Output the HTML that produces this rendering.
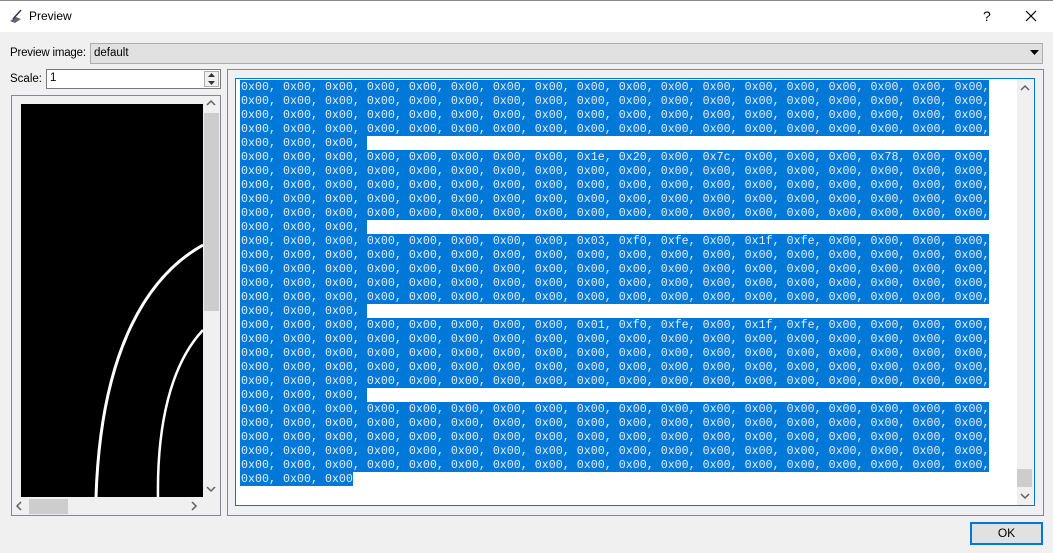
<!DOCTYPE html>
<html><head><meta charset="utf-8"><style>
*{box-sizing:border-box;margin:0;padding:0}
body{width:1053px;height:553px;background:#f0f0f0;font-family:"Liberation Sans",sans-serif;font-size:11.5px;color:#000;position:relative;overflow:hidden}
.abs{position:absolute}
.code{position:absolute;left:240px;top:80px;font-family:"Liberation Mono",monospace;font-size:11.67px;line-height:14px;color:#e4eeff}
.code div{white-space:pre;background:#0078d7;height:14px;width:max-content;padding-left:1px}
</style></head><body>
<div class="abs" style="left:0;top:0;width:1053px;height:1px;background:#888"></div>
<div class="abs" style="left:0;top:1px;width:1053px;height:31px;background:#fff"></div>
<svg class="abs" style="left:8px;top:8px" width="16" height="16" viewBox="0 0 16 16"><path d="M2 13 L8 9 L13 11 L7 15 Z" fill="#666"/><path d="M5 11 L13 2" stroke="#335" stroke-width="1.5"/></svg>
<div class="abs" style="left:29px;top:9px;font-size:12px">Preview</div>
<div class="abs" style="left:983px;top:8px;font-size:14px">?</div>
<svg class="abs" style="left:1025px;top:10px" width="12" height="12"><path d="M1 1L11 11M11 1L1 11" stroke="#000" stroke-width="1.2"/></svg>

<div class="abs" style="left:10px;top:47px;white-space:nowrap;letter-spacing:-0.2px">Preview image:</div>
<div class="abs" style="left:90px;top:43px;width:953px;height:21px;background:#e1e1e1;border:1px solid #adadad;padding:3px 3px">default</div>
<svg class="abs" style="left:1030px;top:50px" width="9" height="6"><path d="M0 0H9L4.5 5Z" fill="#000"/></svg>

<div class="abs" style="left:10px;top:73px">Scale:</div>
<div class="abs" style="left:46px;top:69px;width:175px;height:20px;background:#fff;border:1px solid #7a7a7a;padding:2px 3px">1</div>
<div class="abs" style="left:204px;top:71px;width:15px;height:16px;border:1px solid #adadad;background:#f0f0f0"></div>
<svg class="abs" style="left:207px;top:72px" width="9" height="14"><path d="M1 5L4.5 1L8 5Z M1 9L4.5 13L8 9Z" fill="#333"/></svg>

<div class="abs" style="left:11px;top:95px;width:210px;height:421px;border:1px solid #828790;background:#f0f0f0"></div>
<svg class="abs" style="left:21px;top:104px" width="182" height="393"><rect width="182" height="393" fill="#000"/>
<path d="M182 141 C130 170 80 240 75 393" stroke="#fff" stroke-width="3" fill="none"/>
<path d="M182 226 C150 260 136 320 137 393" stroke="#fff" stroke-width="2.5" fill="none"/></svg>
<div class="abs" style="left:203px;top:96px;width:16px;height:401px;background:#f0f0f0"></div>
<div class="abs" style="left:204px;top:113px;width:15px;height:198px;background:#cdcdcd"></div>
<svg class="abs" style="left:206px;top:99px" width="10" height="8"><path d="M1 6L5 2L9 6" stroke="#606060" stroke-width="1.5" fill="none"/></svg>
<svg class="abs" style="left:206px;top:485px" width="10" height="8"><path d="M1 2L5 6L9 2" stroke="#606060" stroke-width="1.5" fill="none"/></svg>
<div class="abs" style="left:12px;top:497px;width:191px;height:18px;background:#f0f0f0"></div>
<div class="abs" style="left:29px;top:499px;width:39px;height:15px;background:#cdcdcd"></div>
<svg class="abs" style="left:15px;top:501px" width="8" height="10"><path d="M6 1L2 5L6 9" stroke="#606060" stroke-width="1.5" fill="none"/></svg>
<svg class="abs" style="left:190px;top:501px" width="8" height="10"><path d="M2 1L6 5L2 9" stroke="#606060" stroke-width="1.5" fill="none"/></svg>

<div class="abs" style="left:227px;top:69px;width:817px;height:447px;border:1px solid #828790;background:#f0f0f0"></div>
<div class="abs" style="left:235px;top:78px;width:800px;height:428px;border:1px solid #0078d7;background:#fff"></div>
<div class="abs" style="left:237px;top:80px;width:2px;height:14px;background:#fff"></div>
<div class="abs" style="left:1017px;top:79px;width:17px;height:426px;background:#f0f0f0"></div>
<div class="abs" style="left:1017px;top:469px;width:15px;height:18px;background:#cdcdcd"></div>
<svg class="abs" style="left:1020px;top:84px" width="10" height="8"><path d="M1 6L5 2L9 6" stroke="#606060" stroke-width="1.5" fill="none"/></svg>
<svg class="abs" style="left:1020px;top:492px" width="10" height="8"><path d="M1 2L5 6L9 2" stroke="#606060" stroke-width="1.5" fill="none"/></svg>

<div class="code">
<div>0x00, 0x00, 0x00, 0x00, 0x00, 0x00, 0x00, 0x00, 0x00, 0x00, 0x00, 0x00, 0x00, 0x00, 0x00, 0x00, 0x00, 0x00,</div>
<div>0x00, 0x00, 0x00, 0x00, 0x00, 0x00, 0x00, 0x00, 0x00, 0x00, 0x00, 0x00, 0x00, 0x00, 0x00, 0x00, 0x00, 0x00,</div>
<div>0x00, 0x00, 0x00, 0x00, 0x00, 0x00, 0x00, 0x00, 0x00, 0x00, 0x00, 0x00, 0x00, 0x00, 0x00, 0x00, 0x00, 0x00,</div>
<div>0x00, 0x00, 0x00, 0x00, 0x00, 0x00, 0x00, 0x00, 0x00, 0x00, 0x00, 0x00, 0x00, 0x00, 0x00, 0x00, 0x00, 0x00,</div>
<div>0x00, 0x00, 0x00, </div>
<div>0x00, 0x00, 0x00, 0x00, 0x00, 0x00, 0x00, 0x00, 0x1e, 0x20, 0x00, 0x7c, 0x00, 0x00, 0x00, 0x78, 0x00, 0x00,</div>
<div>0x00, 0x00, 0x00, 0x00, 0x00, 0x00, 0x00, 0x00, 0x00, 0x00, 0x00, 0x00, 0x00, 0x00, 0x00, 0x00, 0x00, 0x00,</div>
<div>0x00, 0x00, 0x00, 0x00, 0x00, 0x00, 0x00, 0x00, 0x00, 0x00, 0x00, 0x00, 0x00, 0x00, 0x00, 0x00, 0x00, 0x00,</div>
<div>0x00, 0x00, 0x00, 0x00, 0x00, 0x00, 0x00, 0x00, 0x00, 0x00, 0x00, 0x00, 0x00, 0x00, 0x00, 0x00, 0x00, 0x00,</div>
<div>0x00, 0x00, 0x00, 0x00, 0x00, 0x00, 0x00, 0x00, 0x00, 0x00, 0x00, 0x00, 0x00, 0x00, 0x00, 0x00, 0x00, 0x00,</div>
<div>0x00, 0x00, 0x00, </div>
<div>0x00, 0x00, 0x00, 0x00, 0x00, 0x00, 0x00, 0x00, 0x03, 0xf0, 0xfe, 0x00, 0x1f, 0xfe, 0x00, 0x00, 0x00, 0x00,</div>
<div>0x00, 0x00, 0x00, 0x00, 0x00, 0x00, 0x00, 0x00, 0x00, 0x00, 0x00, 0x00, 0x00, 0x00, 0x00, 0x00, 0x00, 0x00,</div>
<div>0x00, 0x00, 0x00, 0x00, 0x00, 0x00, 0x00, 0x00, 0x00, 0x00, 0x00, 0x00, 0x00, 0x00, 0x00, 0x00, 0x00, 0x00,</div>
<div>0x00, 0x00, 0x00, 0x00, 0x00, 0x00, 0x00, 0x00, 0x00, 0x00, 0x00, 0x00, 0x00, 0x00, 0x00, 0x00, 0x00, 0x00,</div>
<div>0x00, 0x00, 0x00, 0x00, 0x00, 0x00, 0x00, 0x00, 0x00, 0x00, 0x00, 0x00, 0x00, 0x00, 0x00, 0x00, 0x00, 0x00,</div>
<div>0x00, 0x00, 0x00, </div>
<div>0x00, 0x00, 0x00, 0x00, 0x00, 0x00, 0x00, 0x00, 0x01, 0xf0, 0xfe, 0x00, 0x1f, 0xfe, 0x00, 0x00, 0x00, 0x00,</div>
<div>0x00, 0x00, 0x00, 0x00, 0x00, 0x00, 0x00, 0x00, 0x00, 0x00, 0x00, 0x00, 0x00, 0x00, 0x00, 0x00, 0x00, 0x00,</div>
<div>0x00, 0x00, 0x00, 0x00, 0x00, 0x00, 0x00, 0x00, 0x00, 0x00, 0x00, 0x00, 0x00, 0x00, 0x00, 0x00, 0x00, 0x00,</div>
<div>0x00, 0x00, 0x00, 0x00, 0x00, 0x00, 0x00, 0x00, 0x00, 0x00, 0x00, 0x00, 0x00, 0x00, 0x00, 0x00, 0x00, 0x00,</div>
<div>0x00, 0x00, 0x00, 0x00, 0x00, 0x00, 0x00, 0x00, 0x00, 0x00, 0x00, 0x00, 0x00, 0x00, 0x00, 0x00, 0x00, 0x00,</div>
<div>0x00, 0x00, 0x00, </div>
<div>0x00, 0x00, 0x00, 0x00, 0x00, 0x00, 0x00, 0x00, 0x00, 0x00, 0x00, 0x00, 0x00, 0x00, 0x00, 0x00, 0x00, 0x00,</div>
<div>0x00, 0x00, 0x00, 0x00, 0x00, 0x00, 0x00, 0x00, 0x00, 0x00, 0x00, 0x00, 0x00, 0x00, 0x00, 0x00, 0x00, 0x00,</div>
<div>0x00, 0x00, 0x00, 0x00, 0x00, 0x00, 0x00, 0x00, 0x00, 0x00, 0x00, 0x00, 0x00, 0x00, 0x00, 0x00, 0x00, 0x00,</div>
<div>0x00, 0x00, 0x00, 0x00, 0x00, 0x00, 0x00, 0x00, 0x00, 0x00, 0x00, 0x00, 0x00, 0x00, 0x00, 0x00, 0x00, 0x00,</div>
<div>0x00, 0x00, 0x00, 0x00, 0x00, 0x00, 0x00, 0x00, 0x00, 0x00, 0x00, 0x00, 0x00, 0x00, 0x00, 0x00, 0x00, 0x00,</div>
<div>0x00, 0x00, 0x00</div>
</div>

<div class="abs" style="left:970px;top:522px;width:73px;height:23px;border:2px solid #0078d7;background:#e1e1e1;text-align:center;line-height:19px;font-size:12px">OK</div>
</body></html>
